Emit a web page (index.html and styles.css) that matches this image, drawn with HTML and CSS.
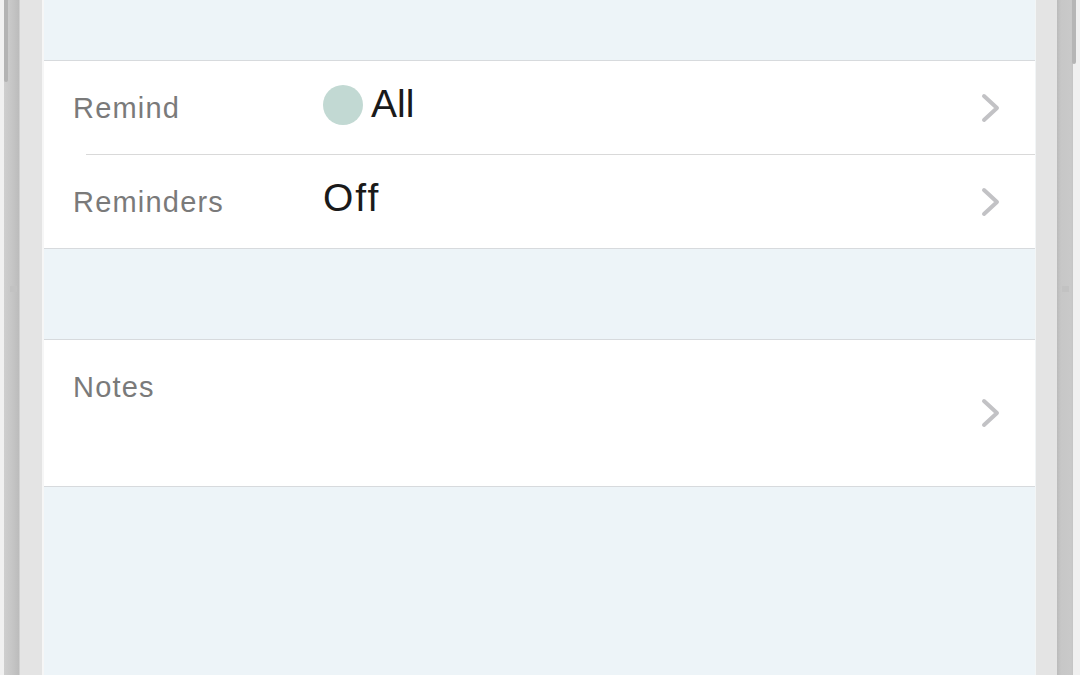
FILE: index.html
```html
<!DOCTYPE html>
<html>
<head>
<meta charset="utf-8">
<link rel="stylesheet" href="styles.css">
</head>
<body>
<div class="device">
  <div class="bezel bezel-left"><span class="btn"></span><span class="tick"></span></div>
  <main class="screen">
    <div class="spacer top"></div>
    <section class="group">
      <div class="row">
        <span class="label">Remind</span>
        <span class="value"><span class="dot"></span>All</span>
        <svg class="chev" viewBox="0 0 20 30"><path d="M3 3 L16 15 L3 27"/></svg>
      </div>
      <div class="sep"></div>
      <div class="row">
        <span class="label">Reminders</span>
        <span class="value off">Off</span>
        <svg class="chev" viewBox="0 0 20 30"><path d="M3 3 L16 15 L3 27"/></svg>
      </div>
    </section>
    <div class="spacer mid"></div>
    <section class="group">
      <div class="row notes">
        <span class="label">Notes</span>
        <svg class="chev" viewBox="0 0 20 30"><path d="M3 3 L16 15 L3 27"/></svg>
      </div>
    </section>
    <div class="spacer fill"></div>
  </main>
  <div class="bezel bezel-right"><span class="btn"></span><span class="tick"></span></div>
</div>
</body>
</html>
```

FILE: styles.css
```css
* { box-sizing: border-box; }
html, body { margin: 0; padding: 0; }
body {
  width: 1080px;
  height: 675px;
  overflow: hidden;
  font-family: "Liberation Sans", Arial, sans-serif;
  background: #e4e4e4;
}
.device {
  display: flex;
  height: 675px;
}
.bezel {
  position: relative;
  flex: none;
  height: 100%;
}
.bezel-left {
  width: 44px;
  background: linear-gradient(to right,
    #f1f1f1 0, #f1f1f1 4px,
    #cfcfcf 4px, #c6c6c6 12px, #bcbcbc 19px,
    #e4e4e4 20px, #e4e4e4 42px,
    #f6f6f6 42px, #f6f6f6 44px);
}
.bezel-right {
  width: 45px;
  background: linear-gradient(to right,
    #f2f5f6 0, #f2f5f6 1px,
    #e4e4e4 1px, #e4e4e4 22px,
    #bababa 22px, #c7c7c7 26px, #c9c9c9 36px, #c4c4c4 38px,
    #f0f0f0 38px, #f0f0f0 45px);
}
.bezel-left .btn {
  position: absolute;
  left: 4px;
  top: 0;
  width: 4px;
  height: 82px;
  border-radius: 0 0 3px 3px;
  background: #b3b3b3;
}
.bezel-right .btn {
  position: absolute;
  left: 37px;
  top: 0;
  width: 4px;
  height: 64px;
  border-radius: 0 0 3px 3px;
  background: #b5b5b5;
}
.tick {
  position: absolute;
  top: 286px;
  width: 7px;
  height: 6px;
  background: #c2c2c2;
}
.bezel-left .tick { left: 10px; }
.bezel-right .tick { left: 27px; }

.screen {
  flex: 1;
  display: flex;
  flex-direction: column;
  background: #edf4f8;
  height: 100%;
}
.spacer { flex: none; }
.spacer.top { height: 61px; border-bottom: 1px solid #d7dadd; }
.spacer.mid { height: 91px; border-bottom: 1px solid #d7dadd; }
.spacer.fill { flex: 1; }
.group {
  background: #ffffff;
  border-bottom: 1px solid #d7dadd;
}
.row {
  display: flex;
  align-items: center;
  height: 93px;
  padding: 0 34px 0 29px;
}
.sep {
  height: 1px;
  margin-left: 42px;
  background: #d9d9d9;
}
.label {
  width: 250px;
  font-size: 29px;
  color: #7a7a7a;
  letter-spacing: 1.2px;
  margin-top: 2px;
}
.value {
  flex: 1;
  display: flex;
  align-items: center;
  font-size: 39px;
  color: #1a1a1a;
  margin-top: -8px;
}
.value.off { letter-spacing: 2px; }
.dot {
  width: 40px;
  height: 40px;
  border-radius: 50%;
  background: #c2d9d3;
  margin-right: 8px;
  margin-top: 2px;
}
.chev {
  flex: none;
  width: 20px;
  height: 30px;
  margin-left: auto;
  fill: none;
  stroke: #c2c2c5;
  stroke-width: 4;
  stroke-linecap: round;
  stroke-linejoin: round;
}
.row.notes {
  height: 146px;
}
.row.notes .label {
  align-self: flex-start;
  margin-top: 31px;
}
```
